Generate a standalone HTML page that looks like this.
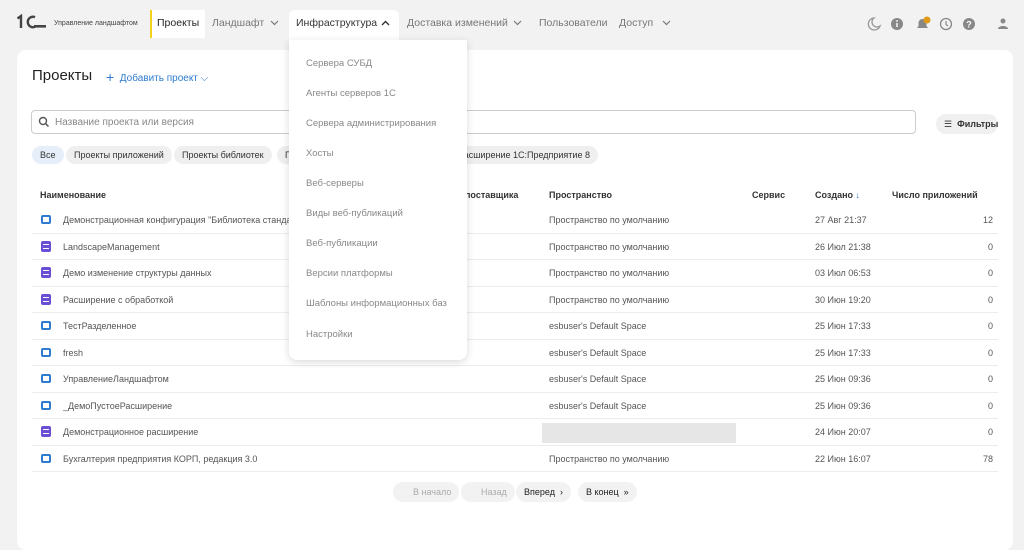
<!DOCTYPE html>
<html><head><meta charset="utf-8"><style>
*{margin:0;padding:0;box-sizing:border-box}
body{width:1024px;height:543px;overflow:hidden;background:#f2f2f2;font-family:"Liberation Sans","Noto Sans CJK SC",sans-serif;position:relative;color:#333}
.a{position:absolute;white-space:nowrap}
.nav{font-size:10.5px;color:#777;top:17px}
.card{position:absolute;left:17px;top:50px;width:996px;height:500px;background:#fff;border-radius:9px}
.chip{position:absolute;top:146px;height:18px;border-radius:9px;background:#efefef;font-size:9px;line-height:18px;padding:0 8px;color:#333}
.th{font-size:9px;font-weight:bold;color:#333;top:190px}
.row{position:absolute;left:32px;width:966px;height:26.5px;border-bottom:1px solid #ececec}
.rt{position:absolute;font-size:9px;color:#555;top:8px;white-space:nowrap}
.ic{position:absolute;left:9px;top:8px;width:10px;height:9px;border:2px solid #2e7bd0;border-radius:2px}
.ic.p{border:none;background:#6a4fd4;top:7px;height:11px;border-radius:2px}
.ic.p:after{content:"";position:absolute;left:2px;top:3px;width:6px;height:3px;border-top:1px solid #fff;border-bottom:1px solid #fff}
.dd{position:absolute;left:289px;top:40px;width:178px;height:320px;background:#fff;border-radius:0 0 8px 8px;box-shadow:0 2px 8px rgba(0,0,0,.15)}
.di{position:absolute;left:17px;font-size:9.5px;color:#888}
.pg{position:absolute;top:482px;height:20px;border-radius:10px;background:#f2f2f2;font-size:9px;line-height:20px;padding:0 8px}
</style></head><body>
<svg class="a" style="left:16px;top:14px" width="30" height="16" viewBox="0 0 30 16">
<path d="M1.5 4.5l3.5-2.5v12" fill="none" stroke="#444" stroke-width="2.4"/>
<path d="M19 3.2a5.2 5.2 0 1 0 0 9.6" fill="none" stroke="#444" stroke-width="2.4"/>
<rect x="18" y="11" width="12" height="2.6" fill="#444"/>
</svg>
<div class="a" style="left:54px;top:20px;font-size:7px;color:#444">Управление ландшафтом</div>
<div class="a" style="left:150px;top:10px;width:55px;height:28px;background:#fff;border-left:2px solid #f2d21c"></div>
<div class="a nav" style="left:157px;color:#222">Проекты</div>
<div class="a nav" style="left:212px">Ландшафт</div>
<svg class="a" style="left:270px;top:20px" width="9" height="6"><path d="M1 1l3.5 3.5L8 1" fill="none" stroke="#777" stroke-width="1.2"/></svg>
<div class="a" style="left:289px;top:10px;width:110px;height:32px;background:#fff;border-radius:6px 6px 0 0"></div>
<div class="a nav" style="left:296px;color:#333">Инфраструктура</div>
<svg class="a" style="left:381px;top:20px" width="9" height="6"><path d="M1 5l3.5-3.5L8 5" fill="none" stroke="#333" stroke-width="1.4"/></svg>
<div class="a nav" style="left:407px">Доставка изменений</div>
<svg class="a" style="left:513px;top:20px" width="9" height="6"><path d="M1 1l3.5 3.5L8 1" fill="none" stroke="#777" stroke-width="1.2"/></svg>
<div class="a nav" style="left:539px">Пользователи</div>
<div class="a nav" style="left:619px">Доступ</div>
<svg class="a" style="left:662px;top:20px" width="9" height="6"><path d="M1 1l3.5 3.5L8 1" fill="none" stroke="#777" stroke-width="1.2"/></svg>
<svg class="a" style="left:866px;top:15px" width="150" height="18" viewBox="0 0 150 18">
<path d="M8 3a6 6 0 1 0 6 8 5 5 0 0 1-6-8z" fill="none" stroke="#999" stroke-width="1.3"/>
<circle cx="31" cy="9" r="6" fill="#888"/><rect x="30.3" y="8" width="1.4" height="4" fill="#fff"/><circle cx="31" cy="6" r=".9" fill="#fff"/>
<path d="M51 13h11l-1.5-2V8a4 4 0 0 0-8 0v3z" fill="#888"/><circle cx="61" cy="5" r="3.5" fill="#e09a1a"/>
<circle cx="80" cy="9" r="5.5" fill="none" stroke="#888" stroke-width="1.3"/><path d="M80 6v3.5l2 1.5" stroke="#888" fill="none" stroke-width="1.2"/>
<circle cx="103" cy="9" r="6" fill="#888"/><text x="103" y="12.5" font-size="9" fill="#fff" text-anchor="middle" font-family="Liberation Sans" font-weight="bold">?</text>
<circle cx="137" cy="6" r="2.5" fill="#888"/><path d="M132 14c0-4 10-4 10 0z" fill="#888"/>
</svg>
<div class="card"></div>
<div class="a" style="left:32px;top:67px;font-size:15px;color:#222">Проекты</div>
<div class="a" style="left:106px;top:69px;font-size:10px;color:#2e7bd0"><span style="font-size:14px;vertical-align:-1px">+</span> &nbsp;Добавить проект ⌵</div>
<div class="a" style="left:31px;top:110px;width:885px;height:24px;border:1px solid #ccc;border-radius:4px"></div>
<svg class="a" style="left:38px;top:116px" width="12" height="12"><circle cx="5" cy="5" r="3.5" fill="none" stroke="#555" stroke-width="1.4"/><path d="M7.5 7.5l3 3" stroke="#555" stroke-width="1.5"/></svg>
<div class="a" style="left:55px;top:117px;font-size:10px;color:#888">Название проекта или версия</div>
<div class="a" style="left:936px;top:114px;width:62px;height:20px;border-radius:10px;background:#f0f0f0;font-size:9px;line-height:20px;padding-left:8px">☰&nbsp; <b>Фильтры</b></div>
<div class="chip" style="left:32px;background:#e6eef9">Все</div>
<div class="chip" style="left:66px">Проекты приложений</div>
<div class="chip" style="left:174px">Проекты библиотек</div>
<div class="chip" style="left:277px">Пр</div>
<div class="chip" style="left:450px">Расширение 1С:Предприятие 8</div>
<div class="a th" style="left:40px">Наименование</div>
<div class="a th" style="left:465px">поставщика</div>
<div class="a th" style="left:549px">Пространство</div>
<div class="a th" style="left:752px">Сервис</div>
<div class="a th" style="left:815px">Создано <span style="color:#2e7bd0">↓</span></div>
<div class="a th" style="left:892px">Число приложений</div>

<div class="row" style="top:207px"><div class="ic"></div><div class="rt" style="left:31px">Демонстрационная конфигурация "Библиотека стандарт</div><div class="rt" style="left:517px">Пространство по умолчанию</div><div class="rt" style="left:783px">27 Авг 21:37</div><div class="rt" style="right:5px">12</div></div>
<div class="row" style="top:233.5px"><div class="ic p"></div><div class="rt" style="left:31px">LandscapeManagement</div><div class="rt" style="left:517px">Пространство по умолчанию</div><div class="rt" style="left:783px">26 Июл 21:38</div><div class="rt" style="right:5px">0</div></div>
<div class="row" style="top:260px"><div class="ic p"></div><div class="rt" style="left:31px">Демо изменение структуры данных</div><div class="rt" style="left:517px">Пространство по умолчанию</div><div class="rt" style="left:783px">03 Июл 06:53</div><div class="rt" style="right:5px">0</div></div>
<div class="row" style="top:286.5px"><div class="ic p"></div><div class="rt" style="left:31px">Расширение с обработкой</div><div class="rt" style="left:517px">Пространство по умолчанию</div><div class="rt" style="left:783px">30 Июн 19:20</div><div class="rt" style="right:5px">0</div></div>
<div class="row" style="top:313px"><div class="ic"></div><div class="rt" style="left:31px">ТестРазделенное</div><div class="rt" style="left:517px">esbuser's Default Space</div><div class="rt" style="left:783px">25 Июн 17:33</div><div class="rt" style="right:5px">0</div></div>
<div class="row" style="top:339.5px"><div class="ic"></div><div class="rt" style="left:31px">fresh</div><div class="rt" style="left:517px">esbuser's Default Space</div><div class="rt" style="left:783px">25 Июн 17:33</div><div class="rt" style="right:5px">0</div></div>
<div class="row" style="top:366px"><div class="ic"></div><div class="rt" style="left:31px">УправлениеЛандшафтом</div><div class="rt" style="left:517px">esbuser's Default Space</div><div class="rt" style="left:783px">25 Июн 09:36</div><div class="rt" style="right:5px">0</div></div>
<div class="row" style="top:392.5px"><div class="ic"></div><div class="rt" style="left:31px">_ДемоПустоеРасширение</div><div class="rt" style="left:517px">esbuser's Default Space</div><div class="rt" style="left:783px">25 Июн 09:36</div><div class="rt" style="right:5px">0</div></div>
<div class="row" style="top:419px"><div class="ic p"></div><div class="rt" style="left:31px">Демонстрационное расширение</div><div style="position:absolute;left:510px;top:4px;width:194px;height:20px;background:#e6e6e6"></div><div class="rt" style="left:783px">24 Июн 20:07</div><div class="rt" style="right:5px">0</div></div>
<div class="row" style="top:445.5px"><div class="ic"></div><div class="rt" style="left:31px">Бухгалтерия предприятия КОРП, редакция 3.0</div><div class="rt" style="left:517px">Пространство по умолчанию</div><div class="rt" style="left:783px">22 Июн 16:07</div><div class="rt" style="right:5px">78</div></div>

<div class="pg" style="left:393px;color:#aaa;padding-left:20px">В начало</div>
<div class="pg" style="left:461px;color:#aaa;padding-left:20px">Назад</div>
<div class="pg" style="left:516px;color:#222">Вперед &nbsp;›</div>
<div class="pg" style="left:578px;color:#222">В конец &nbsp;»</div>

<div class="dd">
<div class="di" style="top:18px">Сервера СУБД</div>
<div class="di" style="top:48px">Агенты серверов 1С</div>
<div class="di" style="top:78px">Сервера администрирования</div>
<div class="di" style="top:108px">Хосты</div>
<div class="di" style="top:138px">Веб-серверы</div>
<div class="di" style="top:168px">Виды веб-публикаций</div>
<div class="di" style="top:198px">Веб-публикации</div>
<div class="di" style="top:228px">Версии платформы</div>
<div class="di" style="top:258px">Шаблоны информационных баз</div>
<div class="di" style="top:289px">Настройки</div>
</div>
</body></html>
